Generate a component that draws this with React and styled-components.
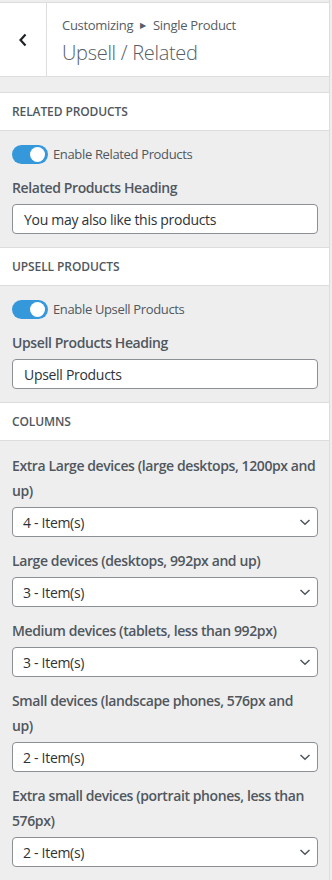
import React from "react";
import styled, { createGlobalStyle } from "styled-components";

const GlobalStyle = createGlobalStyle`
  body {
    margin: 0;
    background: #eee;
    font-family: "Open Sans", "Noto Sans", sans-serif;
  }
`;

const Panel = styled.div`
  width: 330px;
  min-height: 880px;
  background: #eee;
  border-right: 1px solid #ddd;
  box-sizing: border-box;
  padding-top: 2px;
  color: #50575e;
`;

const Header = styled.div`
  display: flex;
  height: 73px;
  background: #fff;
  border-top: 1px solid #ddd;
  border-bottom: 1px solid #ddd;
`;

const BackButton = styled.button`
  width: 47px;
  border: none;
  border-right: 1px solid #ddd;
  background: #fff;
  display: flex;
  align-items: center;
  justify-content: center;
  padding: 0;
  color: #23282d;
`;

const HeaderText = styled.div`
  display: flex;
  flex-direction: column;
  justify-content: center;
  padding-left: 15px;
  padding-top: 4px;
`;

const Crumb = styled.div`
  font-size: 13px;
  line-height: 20px;
  color: #555d66;
  display: flex;
  align-items: center;
  gap: 7px;
  letter-spacing: -0.3px;
`;

const Arrow = styled.span`
  font-size: 8px;
  color: #555d66;
`;

const Title = styled.div`
  font-size: 20px;
  font-weight: 300;
  line-height: 30px;
  color: #555d66;
  margin-top: 3px;
  letter-spacing: -0.3px;
`;

const Spacer = styled.div`
  height: 15px;
`;

const SectionHead = styled.div`
  background: #fff;
  border-top: 1px solid #ddd;
  border-bottom: 1px solid #ddd;
  height: 37px;
  display: flex;
  align-items: center;
  padding-left: 12px;
  font-size: 12px;
  font-weight: 600;
  text-transform: uppercase;
  color: #50575e;
  letter-spacing: -0.1px;
`;

const SectionBody = styled.div`
  padding: ${(p) => p.$pad || "13px 12px 13px"};
  display: flex;
  flex-direction: column;
`;

const ToggleRow = styled.label`
  display: flex;
  align-items: center;
  gap: 5px;
  font-size: 13px;
  color: #50575e;
  height: 20px;
  letter-spacing: -0.35px;
`;

const Switch = styled.span`
  width: 36px;
  height: 19px;
  border-radius: 10px;
  background: #3498db;
  position: relative;
  flex: none;

  &::after {
    content: "";
    position: absolute;
    right: 3px;
    top: 2px;
    width: 15px;
    height: 15px;
    border-radius: 50%;
    background: #fff;
  }
`;

const FieldLabel = styled.div`
  font-size: 14px;
  font-weight: 600;
  line-height: 25px;
  color: #50575e;
  letter-spacing: -0.4px;
  margin-top: ${(p) => p.$top || 0}px;
  margin-bottom: 4px;
`;

const Input = styled.input`
  height: 30px;
  box-sizing: border-box;
  border: 1px solid #8c8f94;
  border-radius: 4px;
  padding: 0 11px;
  font-family: inherit;
  font-size: 14px;
  letter-spacing: -0.3px;
  color: #2c3338;
  background: #fff;
  width: 306px;
  outline: none;
`;

const SelectBox = styled.div`
  height: 30px;
  width: 306px;
  box-sizing: border-box;
  border: 1px solid #8c8f94;
  border-radius: 4px;
  background: #fff;
  display: flex;
  align-items: center;
  justify-content: space-between;
  padding: 0 5px 0 10px;
  font-size: 14px;
  letter-spacing: -0.3px;
  color: #2c3338;
  margin-bottom: 11px;
`;

const Chevron = () => (
  <svg width="14" height="14" viewBox="0 0 14 14" fill="none">
    <path d="M2.5 5 L7 9.3 L11.5 5" stroke="#50575e" strokeWidth="1.5" />
  </svg>
);

const Back = () => (
  <svg width="12" height="16" viewBox="0 0 12 16" fill="none">
    <path d="M8.5 2.5 L3.5 8 L8.5 13.5" stroke="#1d2327" strokeWidth="2.2" />
  </svg>
);

const columns = [
  ["Extra Large devices (large desktops, 1200px and up)", "4 - Item(s)"],
  ["Large devices (desktops, 992px and up)", "3 - Item(s)"],
  ["Medium devices (tablets, less than 992px)", "3 - Item(s)"],
  ["Small devices (landscape phones, 576px and up)", "2 - Item(s)"],
  ["Extra small devices (portrait phones, less than 576px)", "2 - Item(s)"],
];

const App = () => {
  return (
    <Panel>
      <GlobalStyle />
      <Header>
        <BackButton>
          <Back />
        </BackButton>
        <HeaderText>
          <Crumb>
            Customizing <Arrow>▶</Arrow> Single Product
          </Crumb>
          <Title>Upsell / Related</Title>
        </HeaderText>
      </Header>
      <Spacer />

      <SectionHead>Related Products</SectionHead>
      <SectionBody>
        <ToggleRow>
          <Switch />
          Enable Related Products
        </ToggleRow>
        <FieldLabel $top={11}>Related Products Heading</FieldLabel>
        <Input defaultValue="You may also like this products" />
      </SectionBody>

      <SectionHead>Upsell Products</SectionHead>
      <SectionBody>
        <ToggleRow>
          <Switch />
          Enable Upsell Products
        </ToggleRow>
        <FieldLabel $top={11}>Upsell Products Heading</FieldLabel>
        <Input defaultValue="Upsell Products" />
      </SectionBody>

      <SectionHead>Columns</SectionHead>
      <SectionBody $pad="12px 12px 0">
        {columns.map(([label, value]) => (
          <React.Fragment key={label}>
            <FieldLabel>{label}</FieldLabel>
            <SelectBox>
              {value}
              <Chevron />
            </SelectBox>
          </React.Fragment>
        ))}
      </SectionBody>
    </Panel>
  );
};

export default App;
